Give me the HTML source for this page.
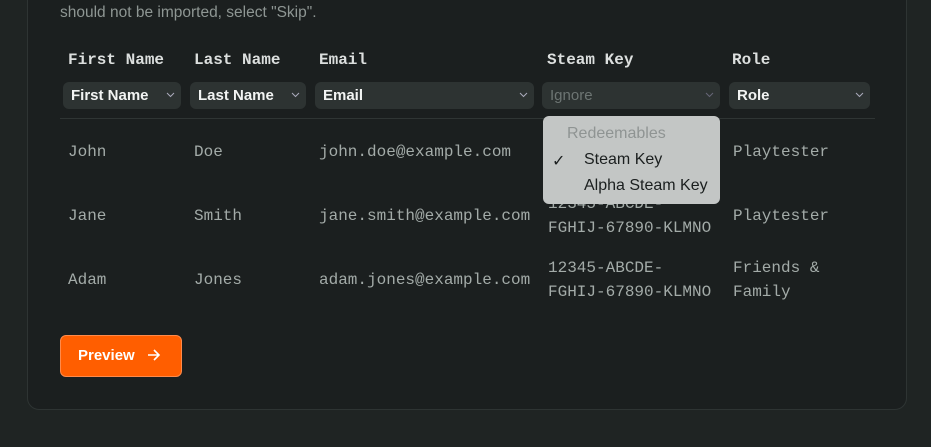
<!DOCTYPE html>
<html><head><style>
body{margin:0;width:931px;height:447px;background:#1f2423;position:relative;overflow:hidden;font-family:"Liberation Sans",sans-serif}
.card{position:absolute;left:27px;top:-20px;width:878px;height:428px;background:#1b1f1f;border:1px solid #2e3433;border-radius:12px}
.a{position:absolute}
.intro{left:60px;top:4px;color:#8e9693;font-size:15.5px}
.h{top:51px;font-family:"Liberation Mono",monospace;font-weight:bold;font-size:16px;color:#dcdfde}
.s{top:82px;height:27px;background:#2d3332;border-radius:6px;color:#f2f4f3;font-weight:bold;font-size:15px;line-height:27px;padding-left:8px;box-sizing:border-box}
.s svg{position:absolute;right:6px;top:10px}
.d{top:155px;font-family:"Liberation Mono",monospace;font-size:16px;color:#a3aba8;line-height:24px;margin-top:-15px}
.line{left:60px;top:118px;width:815px;height:1px;background:#2f3534}
.menu{left:543px;top:116px;width:177px;height:88px;background:#c3c6c5;border-radius:6px;font-size:16px;color:#1b1f1f}
.btn{left:60px;top:335px;width:122px;height:42px;background:#ff5e00;border-radius:6px;color:#fff;font-weight:bold;font-size:15px;line-height:40px;box-sizing:border-box;padding-left:17px;border:1px solid #ff8a4a}
</style></head><body>
<div class="card"></div>
<div class="a intro">should not be imported, select "Skip".</div>
<div class="a h" style="left:68px">First Name</div>
<div class="a h" style="left:194px">Last Name</div>
<div class="a h" style="left:319px">Email</div>
<div class="a h" style="left:547px">Steam Key</div>
<div class="a h" style="left:732px">Role</div>
<div class="a s" style="left:63px;width:118px">First Name<svg width="9" height="6"><path d="M1 1l3.5 3.5L8 1" stroke="#aab" fill="none"/></svg></div>
<div class="a s" style="left:190px;width:116px">Last Name<svg width="9" height="6"><path d="M1 1l3.5 3.5L8 1" stroke="#aab" fill="none"/></svg></div>
<div class="a s" style="left:315px;width:219px">Email<svg width="9" height="6"><path d="M1 1l3.5 3.5L8 1" stroke="#aab" fill="none"/></svg></div>
<div class="a s" style="left:542px;width:178px;color:#6d7573;font-weight:normal">Ignore<svg width="9" height="6"><path d="M1 1l3.5 3.5L8 1" stroke="#667" fill="none"/></svg></div>
<div class="a s" style="left:729px;width:141px">Role<svg width="9" height="6"><path d="M1 1l3.5 3.5L8 1" stroke="#aab" fill="none"/></svg></div>
<div class="a line"></div>
<div class="a d" style="left:68px">John</div>
<div class="a d" style="left:194px">Doe</div>
<div class="a d" style="left:319px">john.doe@example.com</div>
<div class="a d" style="left:733px">Playtester</div>
<div class="a d" style="left:68px;top:219px">Jane</div>
<div class="a d" style="left:194px;top:219px">Smith</div>
<div class="a d" style="left:319px;top:219px">jane.smith@example.com</div>
<div class="a d" style="left:548px;top:207px">12345-ABCDE-<br>FGHIJ-67890-KLMNO</div>
<div class="a d" style="left:733px;top:219px">Playtester</div>
<div class="a d" style="left:68px;top:283px">Adam</div>
<div class="a d" style="left:194px;top:283px">Jones</div>
<div class="a d" style="left:319px;top:283px">adam.jones@example.com</div>
<div class="a d" style="left:548px;top:271px">12345-ABCDE-<br>FGHIJ-67890-KLMNO</div>
<div class="a d" style="left:733px;top:271px">Friends &amp;<br>Family</div>
<div class="a menu">
<div class="a" style="left:24px;top:9px;color:#8f9493">Redeemables</div>
<div class="a" style="left:9px;top:35px">✓</div>
<div class="a" style="left:41px;top:35px">Steam Key</div>
<div class="a" style="left:41px;top:61px">Alpha Steam Key</div>
</div>
<div class="a btn">Preview <svg width="14" height="12" style="margin-left:8px;vertical-align:-1px"><path d="M1 6h11M7 1l5 5-5 5" stroke="#fff" stroke-width="1.6" fill="none"/></svg></div>
</body></html>
